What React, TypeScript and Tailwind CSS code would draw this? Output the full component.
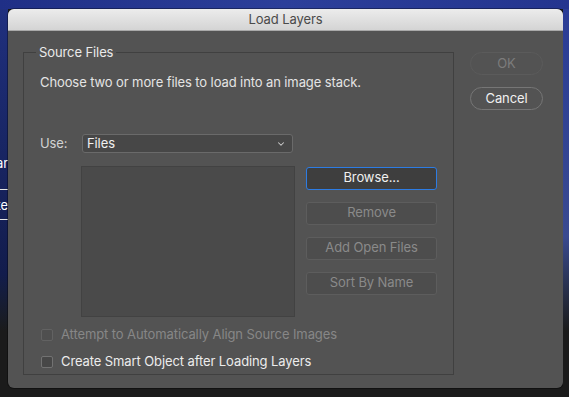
import { ChevronDown } from "lucide-react";

const font = { fontFamily: "Inter, 'Noto Sans', sans-serif" };

function SideButton({ label, primary }: { label: string; primary?: boolean }) {
  return (
    <button
      className={
        primary
          ? "h-[23px] w-[131px] rounded-[3px] border border-[#2d7ce3] bg-[#3e3e3e] text-[13px] text-[#f0f0f0]"
          : "h-[23px] w-[131px] rounded-[3px] border border-[#5d5d5d] bg-[#4d4d4d] text-[13px] text-[#8a8a8a]"
      }
    >
      {label}
    </button>
  );
}

function Check({ label, disabled }: { label: string; disabled?: boolean }) {
  return (
    <label className="flex h-[16px] items-center gap-[8px]">
      <span
        className={
          disabled
            ? "ml-[1px] h-[12px] w-[12px] rounded-[2px] border border-[#626262] bg-[#4f4f4f]"
            : "ml-[1px] h-[12px] w-[12px] rounded-[2px] border border-[#727272] bg-[#474747]"
        }
      />
      <span className={disabled ? "text-[13px] text-[#878787]" : "text-[13px] text-[#ececec]"}>
        {label}
      </span>
    </label>
  );
}

export default function App() {
  return (
    <div
      className="flex h-[397px] w-[569px] flex-col overflow-hidden bg-[#1b1b1b] tracking-[-0.1px]"
      style={font}
    >
      {/* desktop behind the dialog */}
      <div className="h-[9px] shrink-0 bg-linear-to-r from-[#1f2f86] via-[#2c3f9a] to-[#24358f]" />

      <div className="flex h-[379px] shrink-0">
        {/* left strip of background app */}
        <div className="flex w-[8px] shrink-0 flex-col overflow-hidden bg-linear-to-b from-[#20307f] via-[#121c4c] via-70% to-[#1b1b1b] to-85% text-[13px] text-white">
          <div className="mt-[146px] flex justify-end whitespace-nowrap leading-[16px]">ar</div>
          <div className="mt-[18px] h-[1px] w-full bg-[#e8e8e8]" />
          <div className="mt-[7px] flex justify-end whitespace-nowrap leading-[16px]">ke</div>
          <div className="mt-[6px] h-[1px] w-full bg-[#e8e8e8]" />
        </div>

        <div className="flex h-[379px] w-[555px] shrink-0 flex-col overflow-hidden rounded-[6px] bg-[#535353] shadow-[0_0_0_1px_rgba(0,0,0,0.35)]">
          {/* title bar */}
          <div className="flex h-[22px] shrink-0 items-center justify-center border-b border-[#a9a9a9] bg-linear-to-b from-[#ececec] to-[#d4d4d4] text-[13px] text-[#4a4a4a]">
            Load Layers
          </div>

          <div className="flex flex-1 pl-[15px] pt-[13px]">
            {/* Source Files group */}
            <fieldset className="h-[331px] w-[430px] border border-[#404040]">
              <legend className="ml-[12px] px-[3px] text-[13px] leading-[16px] text-[#eaeaea]">
                Source Files
              </legend>

              <div className="px-[16px]">
                <p className="mt-[14px] text-[13px] leading-[16px] text-[#e4e4e4]">
                  Choose two or more files to load into an image stack.
                </p>

                <div className="mt-[44px] flex items-center">
                  <span className="w-[42px] text-[13px] text-[#d2d2d2]">Use:</span>
                  <div className="flex h-[19px] w-[211px] items-center justify-between rounded-[3px] border border-[#6a6a6a] bg-[#474747] pl-[4px] pr-[6px] text-[13px] text-[#f0f0f0]">
                    <span>Files</span>
                    <ChevronDown size={10} strokeWidth={2.5} className="text-[#cfcfcf]" />
                  </div>
                </div>

                <div className="mt-[12px] flex items-start">
                  <div className="ml-[41px] h-[151px] w-[214px] border border-[#424242] bg-[#4a4a4a]" />
                  <div className="ml-[11px] mt-[1px] flex flex-col gap-[12px]">
                    <SideButton label="Browse..." primary />
                    <SideButton label="Remove" />
                    <SideButton label="Add Open Files" />
                    <SideButton label="Sort By Name" />
                  </div>
                </div>

                <div className="mt-[10px] flex flex-col gap-[11px]">
                  <Check label="Attempt to Automatically Align Source Images" disabled />
                  <Check label="Create Smart Object after Loading Layers" />
                </div>
              </div>
            </fieldset>

            {/* dialog buttons */}
            <div className="ml-[16px] flex flex-col gap-[12px] pt-[8px]">
              <button className="h-[23px] w-[73px] rounded-full border border-[#5b5b5b] text-[13px] text-[#7c7c7c]">
                OK
              </button>
              <button className="h-[23px] w-[73px] rounded-full border border-[#767676] text-[13px] text-[#f0f0f0]">
                Cancel
              </button>
            </div>
          </div>
        </div>

        {/* right strip */}
        <div className="w-[6px] shrink-0 bg-linear-to-b from-[#2a3c96] via-[#3a4a90] via-60% to-[#1b1b1b] to-85%" />
      </div>
    </div>
  );
}
